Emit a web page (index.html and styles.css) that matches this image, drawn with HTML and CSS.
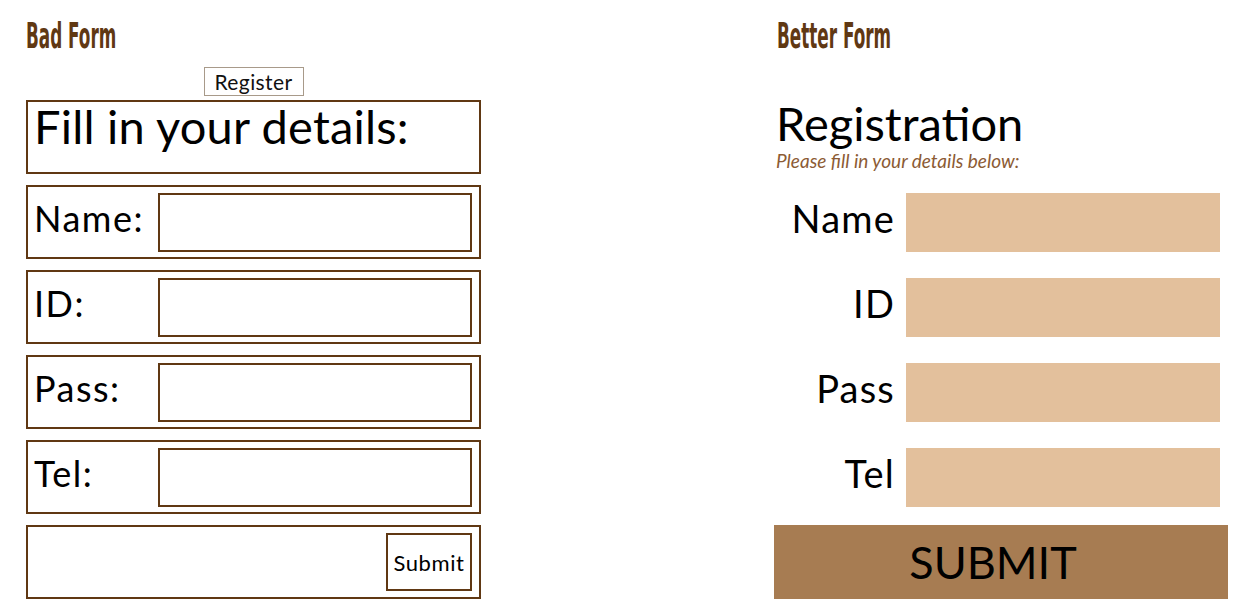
FILE: index.html
```html
<!DOCTYPE html>
<html>
<head>
	<title>Forms</title>
	<meta charset="UTF-8">
	<link rel="stylesheet" href="styles.css">
</head>
<body>
	<div id="page">
		<div class="column" id="bad">
			<h2 class="title"><span>Bad Form</span></h2>
			<div class="reg-line"><button class="reg-btn">Register</button></div>
			<div class="box"><p class="fill">Fill in your details:</p></div>
			<div class="box row"><label>Name:</label><input type="text"></div>
			<div class="box row"><label>ID:</label><input type="text"></div>
			<div class="box row"><label>Pass:</label><input type="password"></div>
			<div class="box row"><label>Tel:</label><input type="text"></div>
			<div class="box row end"><button class="small-submit">Submit</button></div>
		</div>
		<div class="column" id="better">
			<h2 class="title"><span>Better Form</span></h2>
			<div class="reg-line"></div>
			<div class="intro">
				<h1>Registration</h1>
				<p>Please fill in your details below:</p>
			</div>
			<div class="field"><label>Name</label><input type="text"></div>
			<div class="field"><label>ID</label><input type="text"></div>
			<div class="field"><label>Pass</label><input type="password"></div>
			<div class="field"><label>Tel</label><input type="text"></div>
			<button class="big-submit">SUBMIT</button>
		</div>
	</div>
</body>
</html>
```

FILE: styles.css
```css
*{
	margin: 0;
	padding: 0;
	box-sizing: border-box;
}
body{
	background: #fff;
	font-family: Lato, "Open Sans", sans-serif;
	color: #000;
}
#page{
	display: flex;
	gap: 293px;
	padding-left: 26px;
}
.column{
	width: 455px;
}
#better{
	width: 454px;
}
.title{
	height: 67px;
	padding-top: 16px;
	font-family: "DejaVu Sans Condensed", "DejaVu Sans", sans-serif;
	font-weight: bold;
	font-size: 36px;
	line-height: 40px;
	color: #603813;
}
.title span{
	display: inline-block;
	transform: scaleX(0.52);
	transform-origin: left center;
	white-space: nowrap;
}
#better .title{
	padding-left: 3px;
}
.reg-line{
	height: 33px;
	text-align: center;
}
.reg-btn{
	width: 100px;
	height: 29px;
	background: #fff;
	border: 1px solid #a89a8a;
	font-family: inherit;
	font-size: 21px;
	letter-spacing: 0.4px;
	color: #111;
}
.box{
	height: 74px;
	border: 2px solid #603813;
	margin-bottom: 11px;
	padding: 0 7px 0 6px;
}
.fill{
	font-size: 47px;
	line-height: 48px;
	letter-spacing: 0.2px;
}
.row{
	display: flex;
	align-items: center;
}
.row label{
	width: 124px;
	font-size: 36px;
	letter-spacing: 1.5px;
	padding-bottom: 8px;
}
.row input{
	width: 314px;
	height: 59px;
	border: 2px solid #603813;
	background: #fff;
}
.end{
	justify-content: flex-end;
}
.small-submit{
	width: 86px;
	height: 58px;
	border: 2px solid #603813;
	background: #fff;
	font-family: inherit;
	font-size: 22px;
	letter-spacing: 0.6px;
	color: #000;
}
.intro{
	height: 85px;
	padding-left: 2px;
}
.intro h1{
	font-weight: normal;
	font-size: 47px;
	line-height: 46px;
}
.intro p{
	font-style: italic;
	font-size: 19px;
	line-height: 20px;
	margin-top: 5px;
	color: #8c5b34;
}
.field{
	display: flex;
	align-items: center;
	height: 74px;
	margin-bottom: 11px;
	padding-right: 8px;
}
.field label{
	flex: 1;
	text-align: right;
	font-size: 38px;
	letter-spacing: 1.2px;
	padding-right: 11px;
	padding-bottom: 9px;
}
.field input{
	width: 314px;
	height: 59px;
	border: none;
	background: #e3c09c;
}
.big-submit{
	display: block;
	width: 454px;
	height: 74px;
	border: none;
	background: #a77c52;
	font-family: inherit;
	font-size: 45px;
	padding-right: 16px;
	color: #000;
}
```
